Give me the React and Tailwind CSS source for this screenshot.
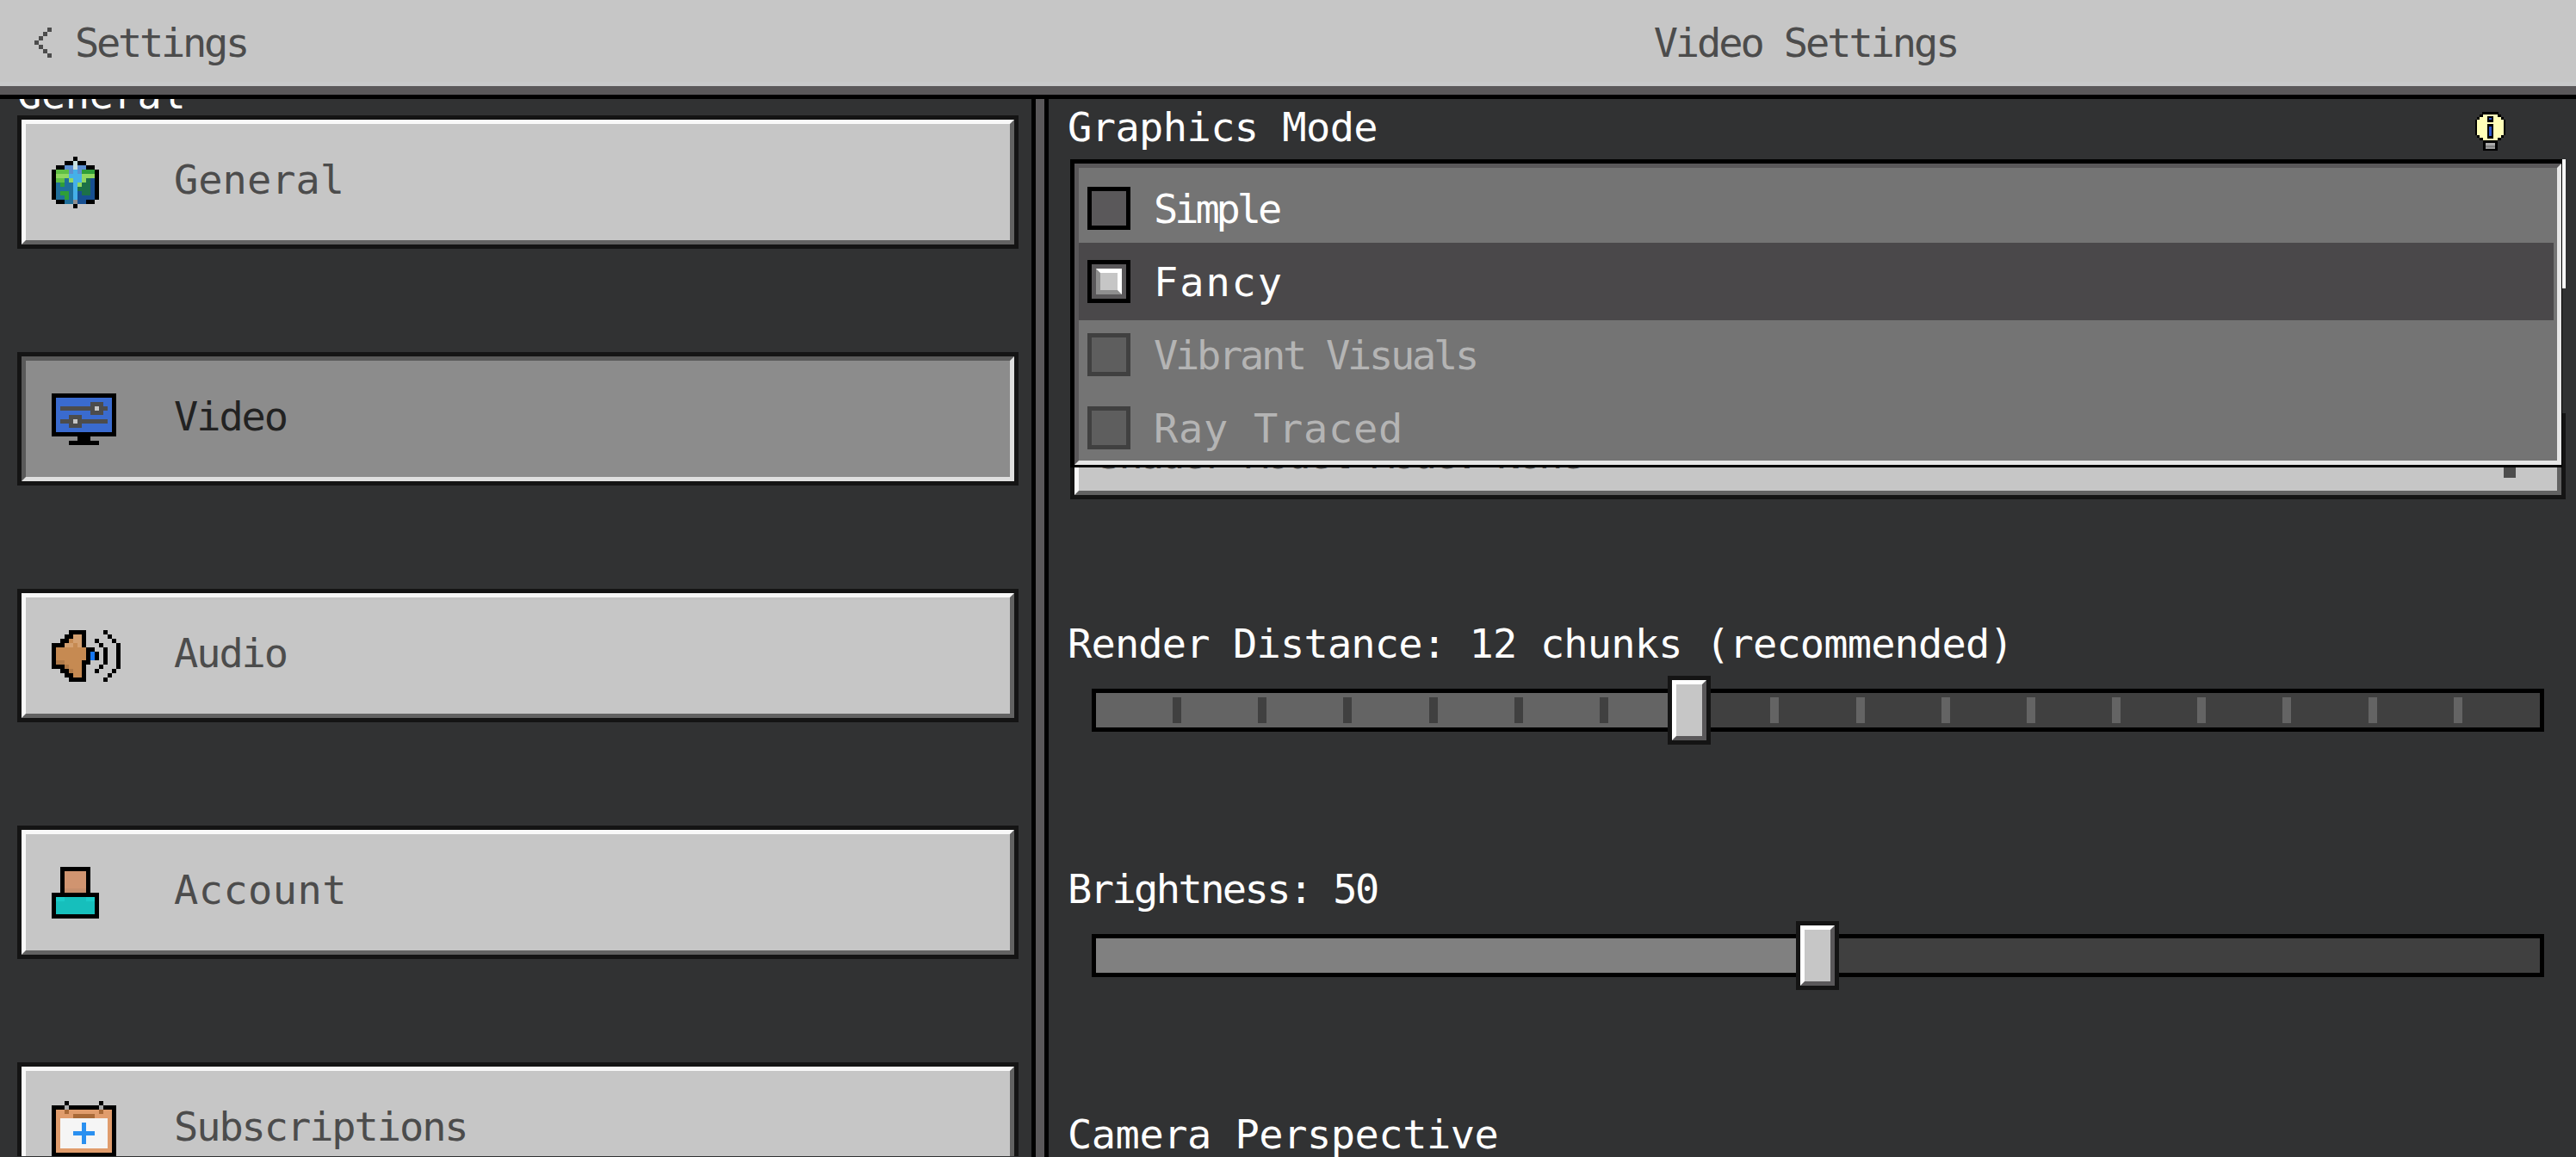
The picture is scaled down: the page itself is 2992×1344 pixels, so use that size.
import React from 'react';

const GLOBE = [
  '.....k.....',
  '...kkwkk...',
  '.kkppwppkk.',
  'kgggpcpGGGk',
  'klllccclllk',
  'kggblccldBk',
  'kbGbbclddBk',
  'kbbbbcdddBk',
  'kbGGbcBddBk',
  'kbbGbcBBBBk',
  '.kkbbsBBkk.',
  '.....k.....',
];
const GLOBE_COLORS = { k: '#000', w: '#c8e0e0', p: '#5b8fd0', g: '#5fbf45', G: '#2f9e38', c: '#45b0e8', l: '#90d860', b: '#1f6f9a', B: '#174f91', d: '#1c7048', s: '#909090' };

const MONITOR = [
  'kkkkkkkkkkkkkkk',
  'kbbbbbbbbbbbbbk',
  'kbbbbbbbbgggbbk',
  'kbggggggggwggbk',
  'kbbbbbbbbgggbbk',
  'kbbbgggbbbbbbbk',
  'kbgggwgggggggbk',
  'kbbbgggbbbbbbbk',
  'kbbbbbbbbbbbbbk',
  'kkkkkkkkkkkkkkk',
  '......kkk......',
  '....kkkkkkk....',
];
const MONITOR_COLORS = { k: '#000', b: '#3a6bcf', g: '#4c4c4c', w: '#c6c6c6' };

const SPEAKER = [
  '....kkkk....k...',
  '...kkLLk.....k..',
  '..kkoLLk..k...k.',
  'kkkLLoLk...k...k',
  'koooooookk..k..k',
  'koooooookBk.k..k',
  'koooooookBk.k..k',
  'kDDooookk...k..k',
  'kkkDoook...k...k',
  '..kkDook..k...k.',
  '...kkook.....k..',
  '....kkkk....k...',
];
const SPEAKER_COLORS = { k: '#000', o: '#c68a52', L: '#d4a070', D: '#b07a48', B: '#1677f2' };

const ACCOUNT = [
  '..kkkkkkk..',
  '..ksssssk..',
  '..ksssssk..',
  '..ksssssk..',
  '..ksssssk..',
  '..kSSSSSk..',
  'kkkkkkkkkkk',
  'kTTtttttTTk',
  'ktttttttttk',
  'ktttttttttk',
  'ktttttttttk',
  'kkkkkkkkkkk',
];
const ACCOUNT_COLORS = { k: '#000', s: '#d09470', S: '#c68e6c', t: '#16bfbc', T: '#1ccbc8' };

const CALENDAR = [
  '...k.......k...',
  'kkkskkkkkkkskkk',
  'kooDoooooooDook',
  'kooooDDDDDooook',
  'koWWWWWWWWWWWok',
  'koWWWWWbWWWWWok',
  'koWWWWWbWWWWWok',
  'koWWWbbbbbWWWok',
  'koWWWWWbWWWWWok',
  'koWWWWWbWWWWWok',
  'koWWWWWWWWWWWok',
  'koooooooooooook',
  'kkkkkkkkkkkkkkk',
];
const CALENDAR_COLORS = { k: '#000', s: '#aaa', o: '#e09c6c', D: '#a96a38', W: '#f5f5f5', b: '#2a90f0' };

function PixelIcon({ rows, colors }) {
  const w = rows[0].length;
  return (
    <svg width={w * 5} height={rows.length * 5} viewBox={`0 0 ${w} ${rows.length}`} shapeRendering="crispEdges" className="block shrink-0">
      {rows.map((row, y) =>
        row.split('').map((c, x) => (colors[c] ? <rect key={`${x}-${y}`} x={x} y={y} width="1" height="1" fill={colors[c]} /> : null))
      )}
    </svg>
  );
}

function Bulb() {
  return (
    <svg width="35" height="45" viewBox="0 0 35 45" shapeRendering="crispEdges" className="block shrink-0">
      <path d="M8 0h19v3h3v3h3v3h2v18h-2v3h-3v3h-4v12H9V33H5v-3H2v-3H0V9h2V6h3V3h3z" fill="#000" />
      <path d="M9 3h17v3h4v3h3v18h-3v3h-4v3H9v-3H5v-3H2V9h3V6h4z" fill="#ffffb8" />
      <rect x="12" y="36" width="11" height="3" fill="#aaa" />
      <rect x="12" y="39" width="11" height="2" fill="#808080" />
      <rect x="12" y="41" width="11" height="2" fill="#999" />
      <rect x="14" y="5" width="7" height="7" fill="#000" />
      <rect x="16" y="7" width="3" height="2" fill="#2a55d0" />
      <rect x="14" y="14" width="7" height="17" fill="#000" />
      <rect x="16" y="17" width="3" height="11" fill="#2a55d0" />
    </svg>
  );
}

function BackChevron() {
  return (
    <svg width="20" height="35" viewBox="0 0 4 7" shapeRendering="crispEdges" className="block" fill="#4c4c4c">
      <rect x="3" y="0" width="1" height="1" />
      <rect x="2" y="1" width="1" height="1" />
      <rect x="1" y="2" width="1" height="1" />
      <rect x="0" y="3" width="1" height="1" />
      <rect x="1" y="4" width="1" height="1" />
      <rect x="2" y="5" width="1" height="1" />
      <rect x="3" y="6" width="1" height="1" />
    </svg>
  );
}

const navItems = [
  { label: 'General', icon: GLOBE, colors: GLOBE_COLORS, tracking: 'tracking-[0px]', ml: 'ml-[87px]' },
  { label: 'Video', icon: MONITOR, colors: MONITOR_COLORS, tracking: 'tracking-[-2.1px]', ml: 'ml-[67px]', active: true },
  { label: 'Audio', icon: SPEAKER, colors: SPEAKER_COLORS, tracking: 'tracking-[-2.1px]', ml: 'ml-[62px]' },
  { label: 'Account', icon: ACCOUNT, colors: ACCOUNT_COLORS, tracking: 'tracking-[0.4px]', ml: 'ml-[87px]' },
  { label: 'Subscriptions', icon: CALENDAR, colors: CALENDAR_COLORS, tracking: 'tracking-[-2.1px]', ml: 'ml-[67px]' },
];

function NavButton({ item }) {
  const bevel = item.active
    ? 'bg-[#8c8c8c] border-t-[#5a5a5a] border-l-[#5a5a5a] border-b-[#dfdfdf] border-r-[#dfdfdf] text-[#222222]'
    : 'bg-[#c6c6c6] border-t-[#f8f8f8] border-l-[#f8f8f8] border-b-[#626262] border-r-[#626262] text-[#4c4c4c]';
  return (
    <div className="h-[155px] shrink-0 border-[5px] border-[#141414]">
      <div className={`flex h-full items-center border-[5px] pl-[30px] ${bevel}`}>
        <PixelIcon rows={item.icon} colors={item.colors} />
        <span className={`mb-[6px] h-[35px] whitespace-nowrap ${item.ml} ${item.tracking}`}>{item.label}</span>
      </div>
    </div>
  );
}

function Checkbox({ checked, disabled }) {
  return (
    <div className={`flex h-[50px] w-[50px] shrink-0 items-center justify-center border-[5px] ${disabled ? 'border-[#404040] bg-[#5e5e5e]' : 'border-black bg-[#5a585a]'}`}>
      {checked && (
        <div className="h-[30px] w-[30px] border-[5px] border-t-white border-r-white border-b-[#8f8f8f] border-l-[#8f8f8f] bg-[#c6c6c6]" />
      )}
    </div>
  );
}

function ModeRow({ label, tracking, checked, disabled, box }) {
  return (
    <div className={`flex items-start pl-[10px] ${box} ${checked ? 'mr-[4px] bg-[#4a484a]' : ''}`}>
      <Checkbox checked={checked} disabled={disabled} />
      <span className={`ml-[27px] mt-[8px] h-[35px] whitespace-nowrap ${tracking} ${disabled ? 'text-[#b4b4b4]' : 'text-white'}`}>{label}</span>
    </div>
  );
}

function GraphicsDropdown() {
  return (
    <div className="relative mt-[20px] w-[1737px] pt-[295px]">
      <div className="h-[100px] border-[5px] border-[#141414]">
        <div className="flex h-full justify-between overflow-hidden border-[5px] border-t-0 border-l-[#f8f8f8] border-b-[#626262] border-r-[#626262] bg-[#c6c6c6] pl-[22px] pr-[48px]">
          <span className="mt-[25px] h-[35px] whitespace-nowrap tracking-[-3.9px] text-[#4c4c4c]">Shader Model Mode: None</span>
          <span className="mb-[15px] mt-auto h-[30px] w-[14px] bg-[#4c4c4c]" />
        </div>
      </div>
      <div className="absolute left-0 top-0 h-[358px] w-[1733px] border-t-[5px] border-l-[5px] border-r-[1px] border-b-[3px] border-black">
        <div className="h-full overflow-hidden border-[5px] border-t-[#5a585a] border-l-[#5a585a] border-b-[#e6e6e6] border-r-[#e6e6e6] bg-[#747474]">
          <ModeRow label="Simple" tracking="tracking-[-4.1px]" box="h-[87px] pt-[22px]" />
          <ModeRow label="Fancy" tracking="tracking-[1.9px]" checked box="h-[90px] pt-[20px]" />
          <ModeRow label="Vibrant Visuals" tracking="tracking-[-3.3px]" disabled box="h-[85px] pt-[15px]" />
          <ModeRow label="Ray Traced" tracking="tracking-[0.7px]" disabled box="h-[78px] pt-[15px]" />
        </div>
      </div>
      <div className="absolute right-0 top-0 h-[150px] w-[4px] bg-white" />
    </div>
  );
}

function Slider({ fill, fillColor, ticks }) {
  const tickList = ticks ? Array.from({ length: 16 }, (_, i) => i) : [];
  return (
    <div className="relative ml-[50px] mt-[35px] h-[50px] w-[1687px] border-[5px] border-black bg-[#404040]">
      <div className="h-full" style={{ width: fill, backgroundColor: fillColor }} />
      {ticks && (
        <div className="absolute inset-x-0 inset-y-[5px] flex justify-between pl-[89px] pr-[90px]">
          {tickList.map(i => (
            <div key={i} className="w-[10px]" style={{ backgroundColor: i <= 6 ? '#404040' : '#646464' }} />
          ))}
        </div>
      )}
      <div className="absolute top-[-20px] h-[80px] w-[50px] border-[5px] border-[#141414]" style={{ left: fill }}>
        <div className="h-full border-[5px] border-t-white border-l-white border-b-[#5a585a] border-r-[#5a585a] bg-[#c6c6c6]" />
      </div>
    </div>
  );
}

export default function App() {
  return (
    <div className="h-[1344px] w-[2992px] overflow-hidden bg-[#313233] font-['DejaVu_Sans_Mono',monospace] text-[47px] leading-[35px]">
      <header className="flex h-[95px] bg-[#c6c6c6] pt-[32px] text-[#4c4c4c]">
        <div className="flex w-[1218px] pl-[40px]">
          <BackChevron />
          <span className="ml-[27px] tracking-[-3.3px]">Settings</span>
        </div>
        <div className="w-[1758px] text-center tracking-[-3.1px]">Video Settings</div>
      </header>
      <div className="h-[5px] bg-[#c8c9ca]" />
      <div className="h-[10px] bg-[#5a585a]" />
      <div className="h-[5px] bg-black" />

      <div className="flex h-[1229px]">
        <aside className="flex h-[1228px] w-[1198px] shrink-0 flex-col overflow-hidden pl-[20px] pr-[15px]">
          <div className="mb-[7px] mt-[-23px] h-[35px] shrink-0 whitespace-nowrap tracking-[-0.4px] text-white">General</div>
          <div className="flex flex-col gap-[120px]">
            {navItems.map(item => <NavButton key={item.label} item={item} />)}
          </div>
        </aside>

        <div className="h-full w-[20px] shrink-0 border-x-[5px] border-x-black bg-[#5a585a]" />

        <main className="min-w-0 flex-1 text-white">
          <div className="flex h-[50px] items-start justify-between pl-[22px] pr-[82px] pt-[15px]">
            <div className="h-[35px] whitespace-nowrap tracking-[-0.6px]">Graphics Mode</div>
            <Bulb />
          </div>
          <div className="ml-[25px]">
            <GraphicsDropdown />
          </div>

          <div className="mt-[150px] h-[35px] whitespace-nowrap pl-[22px] tracking-[-0.85px]">Render Distance: 12 chunks (recommended)</div>
          <Slider fill={664} fillColor="#646464" ticks />

          <div className="mt-[165px] h-[35px] whitespace-nowrap pl-[22px] tracking-[-2.6px]">Brightness: 50</div>
          <Slider fill={813} fillColor="#808080" />

          <div className="mt-[165px] h-[35px] whitespace-nowrap pl-[22px] tracking-[-0.5px]">Camera Perspective</div>
        </main>
      </div>
    </div>
  );
}
